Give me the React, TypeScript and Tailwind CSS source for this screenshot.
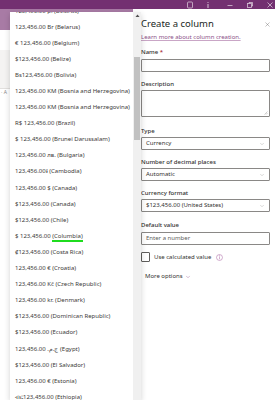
import { ChevronDown, X } from "lucide-react";

const currencies = [
  "123,456.00 р. (Belarus)",
  "123,456.00 Br (Belarus)",
  "€ 123,456.00 (Belgium)",
  "$123,456.00 (Belize)",
  "Bs123,456.00 (Bolivia)",
  "123,456.00 KM (Bosnia and Herzegovina)",
  "123,456.00 KM (Bosnia and Herzegovina)",
  "R$ 123,456.00 (Brazil)",
  "$ 123,456.00 (Brunei Darussalam)",
  "123,456.00 лв. (Bulgaria)",
  "123,456.00៛ (Cambodia)",
  "123,456.00 $ (Canada)",
  "$123,456.00 (Canada)",
  "$123,456.00 (Chile)",
  "$ 123,456.00 (Columbia)",
  "₡123,456.00 (Costa Rica)",
  "123,456.00 € (Croatia)",
  "123,456.00 Kč (Czech Republic)",
  "123,456.00 kr. (Denmark)",
  "$123,456.00 (Dominican Republic)",
  "$123,456.00 (Ecuador)",
  "123,456.00 ج.م.‏ (Egypt)",
  "$123,456.00 (El Salvador)",
  "123,456.00 € (Estonia)",
  "ብር123,456.00 (Ethiopia)",
];

const Label = ({ text, required }: { text: string; required?: boolean }) => (
  <div className="h-[8px] leading-[8px] text-[6px] font-medium text-[#323130]">
    {text}
    {required && <span className="text-[#a4262c]"> *</span>}
  </div>
);

const Select = ({ value }: { value: string }) => (
  <div className="mt-[2px] h-[13px] border border-[#8a8886] rounded-[1px] flex items-center justify-between pl-[4px] pr-[4px] text-[6px] text-[#323130]">
    <span>{value}</span>
    <ChevronDown size={6} strokeWidth={1.3} className="text-[#8a8886]" />
  </div>
);

export default function App() {
  return (
    <div className="relative w-[275px] h-[400px] overflow-hidden bg-white font-['Noto_Sans','Open_Sans',sans-serif]">
      {/* window title bar */}
      <div className="h-[9px] bg-[#733071] flex items-center justify-end pr-[1px] text-white/70">
        <svg width="8" height="8" viewBox="0 0 8 8" fill="none" stroke="currentColor" strokeWidth="0.8">
          <rect x="1.5" y="1" width="5" height="6" rx="1" />
        </svg>
        <svg width="8" height="8" viewBox="0 0 8 8" className="ml-[10px]" fill="currentColor">
          <circle cx="4" cy="1.5" r="0.6" />
          <rect x="3.5" y="3" width="1" height="4" />
        </svg>
        <svg width="8" height="8" viewBox="0 0 8 8" className="ml-[14px]" stroke="currentColor" strokeWidth="0.8">
          <line x1="1.5" y1="4.5" x2="6.5" y2="4.5" />
        </svg>
        <svg width="8" height="8" viewBox="0 0 8 8" className="ml-[12px]" fill="none" stroke="currentColor" strokeWidth="0.8">
          <rect x="1.5" y="2.5" width="4" height="4" />
          <polyline points="3,2.5 3,1.5 6.5,1.5 6.5,5 5.5,5" />
        </svg>
        <svg width="8" height="8" viewBox="0 0 8 8" className="ml-[12px]" stroke="currentColor" strokeWidth="0.8">
          <line x1="1.5" y1="1.5" x2="6.5" y2="6.5" />
          <line x1="6.5" y1="1.5" x2="1.5" y2="6.5" />
        </svg>
      </div>

      <div className="flex h-[391px]">
        {/* app behind the menu */}
        <div className="w-[133px] flex flex-col">
          <div className="h-[21px] bg-[#a87ba5]" />
          <div className="h-[20px] bg-white" />
          <div className="h-[39px] bg-[#f4f3f2] border-b border-[#e1dfdd]" />
          <div className="h-[6px] text-[5px] leading-[6px] text-[#8a8886] pl-[1px]">· A</div>
          <div className="flex-1 bg-white" />
        </div>

        {/* create a column panel */}
        <div className="flex-1 pl-[8px] pr-[5px] text-[#323130]">
          <div className="mt-[9px] h-[12px] flex items-center justify-between">
            <span className="text-[9.5px] leading-[12px] text-[#201f1e]">Create a column</span>
            <X size={7} strokeWidth={1.3} className="text-[#605e5c] mr-[-1px]" />
          </div>
          <div className="mt-[3px] h-[8px] leading-[8px] text-[6px] text-[#8b4f89] underline decoration-[#c9a6c6]">
            Learn more about column creation.
          </div>

          <div className="mt-[7px]">
            <Label text="Name" required />
          </div>
          <div className="mt-[3px] h-[13px] border border-[#8a8886] rounded-[1px]" />

          <div className="mt-[8px]">
            <Label text="Description" />
          </div>
          <div className="mt-[2px] h-[27px] border border-[#8a8886] rounded-[1px] relative">
            <svg width="4" height="4" viewBox="0 0 4 4" className="absolute right-[1px] bottom-[1px]" stroke="#a19f9d" strokeWidth="0.5">
              <line x1="0.5" y1="3.5" x2="3.5" y2="0.5" />
              <line x1="2" y1="3.5" x2="3.5" y2="2" />
            </svg>
          </div>

          <div className="mt-[10px]">
            <Label text="Type" />
          </div>
          <Select value="Currency" />

          <div className="mt-[8px]">
            <Label text="Number of decimal places" />
          </div>
          <Select value="Automatic" />

          <div className="mt-[8px]">
            <Label text="Currency format" />
          </div>
          <Select value="$123,456.00 (United States)" />

          <div className="mt-[9px]">
            <Label text="Default value" />
          </div>
          <div className="mt-[3px] h-[13px] border border-[#8a8886] rounded-[1px] flex items-center pl-[4px] text-[6px] text-[#605e5c]">
            Enter a number
          </div>

          <div className="mt-[7px] h-[10px] flex items-center">
            <div className="w-[9px] h-[10px] border border-[#605e5c] rounded-[1px] bg-white" />
            <span className="ml-[4px] text-[6px] text-[#323130]">Use calculated value</span>
            <svg width="7" height="7" viewBox="0 0 8 8" className="ml-[5px]" fill="none" stroke="#b57ab0" strokeWidth="0.7">
              <circle cx="4" cy="4" r="3.4" />
              <line x1="4" y1="3.5" x2="4" y2="6" />
              <circle cx="4" cy="2.2" r="0.3" fill="#b57ab0" />
            </svg>
          </div>

          <div className="mt-[10px] pl-[4px] flex items-center gap-[2px] text-[6px] text-[#323130]">
            <span>More options</span>
            <ChevronDown size={6} strokeWidth={1.5} className="text-[#8b4f89]" />
          </div>
        </div>
      </div>

      {/* open currency dropdown menu */}
      <div className="absolute left-[10px] top-[12px] bottom-0 w-[131px] flex bg-white shadow-[0_2px_6px_rgba(0,0,0,0.18)]">
        <div className="flex-1 overflow-hidden">
          <div className="mt-[-9px]">
            {currencies.map((c, i) => (
              <div key={i} className="h-[16.1px] flex items-center pl-[5px] text-[6px] text-[#3b3a39] whitespace-nowrap">
                {i === 14 ? (
                  <span>
                    $ 123,456.00{" "}
                    <span className="border-b-[2px] border-[#1fdc1f]">(Columbia)</span>
                  </span>
                ) : (
                  c
                )}
              </div>
            ))}
          </div>
        </div>
        <div className="w-[8px] bg-[#f0f0f0] flex flex-col items-center">
          <svg width="5" height="6" viewBox="0 0 5 6" className="mt-[1px]" fill="#505050">
            <polygon points="2.5,1.5 4.5,4 0.5,4" />
          </svg>
          <div className="mt-[38px] w-[6px] h-[83px] bg-[#c1c1c1]" />
        </div>
      </div>
    </div>
  );
}
